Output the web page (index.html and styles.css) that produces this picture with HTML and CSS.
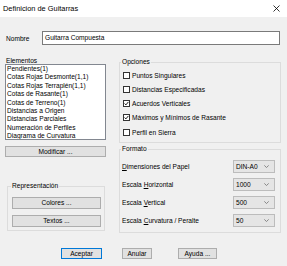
FILE: index.html
```html
<!DOCTYPE html>
<html lang="es">
<head>
    <meta charset="UTF-8">
    <title>Definicion de Guitarras</title>
    <link rel="stylesheet" href="styles.css">
</head>
<body>
<div class="dialog">
    <div class="titlebar">
        <span class="title">Definicion de Guitarras</span>
        <svg class="close" width="7" height="7" viewBox="0 0 7 7"><path d="M0.5 0.5L6.5 6.5M6.5 0.5L0.5 6.5" stroke="#000" stroke-width="0.8"/></svg>
    </div>
    <div class="content">
        <div class="name-row">
            <span class="name-label">Nombre</span>
            <div class="textbox">Guitarra Compuesta</div>
        </div>
        <div class="main">
            <div class="left">
                <div class="caption">Elementos</div>
                <ul class="listbox">
                    <li>Pendientes(1)</li>
                    <li>Cotas Rojas Desmonte(1,1)</li>
                    <li>Cotas Rojas Terraplén(1,1)</li>
                    <li>Cotas de Rasante(1)</li>
                    <li>Cotas de Terreno(1)</li>
                    <li>Distancias a Origen</li>
                    <li>Distancias Parciales</li>
                    <li>Numeración de Perfiles</li>
                    <li>Diagrama de Curvatura</li>
                </ul>
                <div class="btn btn-modificar">Modificar ...</div>
                <fieldset class="group group-rep">
                    <legend>Representación</legend>
                    <div class="btn btn-wide">Colores ...</div>
                    <div class="btn btn-wide btn-textos">Textos ...</div>
                </fieldset>
            </div>
            <div class="right">
                <fieldset class="group group-opc">
                    <legend>Opciones</legend>
                    <div class="check"><span class="box"></span>Puntos Singulares</div>
                    <div class="check"><span class="box"></span>Distancias Especificadas</div>
                    <div class="check"><span class="box"><svg width="5" height="5" viewBox="0 0 5 5"><polyline points="0.6,2.5 1.9,3.9 4.4,0.9" fill="none" stroke="#000" stroke-width="0.9"/></svg></span>Acuerdos Verticales</div>
                    <div class="check"><span class="box"><svg width="5" height="5" viewBox="0 0 5 5"><polyline points="0.6,2.5 1.9,3.9 4.4,0.9" fill="none" stroke="#000" stroke-width="0.9"/></svg></span>Máximos y Mínimos de Rasante</div>
                    <div class="check"><span class="box"></span>Perfil en Sierra</div>
                </fieldset>
                <fieldset class="group group-fmt">
                    <legend>Formato</legend>
                    <div class="row">
                        <span><u>D</u>imensiones del Papel</span>
                        <div class="combo"><span>DIN-A0</span><svg width="5" height="3" viewBox="0 0 5 3"><polyline points="0.3,0.4 2.5,2.5 4.7,0.4" fill="none" stroke="#707070" stroke-width="0.8"/></svg></div>
                    </div>
                    <div class="row">
                        <span>Escala <u>H</u>orizontal</span>
                        <div class="combo"><span>1000</span><svg width="5" height="3" viewBox="0 0 5 3"><polyline points="0.3,0.4 2.5,2.5 4.7,0.4" fill="none" stroke="#707070" stroke-width="0.8"/></svg></div>
                    </div>
                    <div class="row">
                        <span>Escala <u>V</u>ertical</span>
                        <div class="combo"><span>500</span><svg width="5" height="3" viewBox="0 0 5 3"><polyline points="0.3,0.4 2.5,2.5 4.7,0.4" fill="none" stroke="#707070" stroke-width="0.8"/></svg></div>
                    </div>
                    <div class="row">
                        <span>Escala <u>C</u>urvatura / Peralte</span>
                        <div class="combo"><span>50</span><svg width="5" height="3" viewBox="0 0 5 3"><polyline points="0.3,0.4 2.5,2.5 4.7,0.4" fill="none" stroke="#707070" stroke-width="0.8"/></svg></div>
                    </div>
                </fieldset>
            </div>
        </div>
        <div class="footer">
            <div class="btn btn-default">Aceptar</div>
            <div class="btn btn-anular">Anular</div>
            <div class="btn btn-ayuda">Ayuda ...</div>
        </div>
    </div>
</div>
</body>
</html>
```

FILE: styles.css
```css
* {
    margin: 0;
    padding: 0;
    box-sizing: border-box;
    list-style: none;
}

body {
    width: 287px;
    height: 266px;
    overflow: hidden;
    background: #f0f0f0;
    font-family: "Liberation Sans", Arial, sans-serif;
    font-size: 6.6px;
    color: #000;
}

.titlebar {
    height: 17px;
    background: #fff;
    display: flex;
    align-items: center;
    justify-content: space-between;
    padding: 0 7px 0 3px;
}

.title {
    font-size: 7.4px;
}

.content {
    padding: 14px 6px 0 5px;
}

.name-row {
    display: flex;
    align-items: center;
    height: 14px;
}

.name-label {
    width: 37px;
    padding-left: 1px;
}

.textbox {
    width: 238px;
    height: 14px;
    line-height: 12px;
    padding-left: 2px;
    background: #fff;
    border: 1px solid #7a7a7a;
}

.main {
    display: flex;
    gap: 13px;
    margin-top: 12px;
}

.left {
    width: 101px;
}

.right {
    width: 162px;
    margin-top: 1px;
}

.caption {
    height: 7px;
    line-height: 7px;
    padding-left: 1px;
}

.listbox {
    height: 76px;
    overflow: hidden;
    padding-left: 1px;
    background: #fff;
    border: 1px solid #828790;
}

.listbox li {
    line-height: 8.4px;
    white-space: nowrap;
}

.btn {
    height: 11px;
    line-height: 9px;
    text-align: center;
    background: #e1e1e1;
    border: 1px solid #adadad;
}

.btn-modificar {
    margin-top: 6px;
}

.btn-wide {
    height: 12px;
    line-height: 10px;
}

.btn-textos {
    margin-top: 6px;
}

.group {
    border: 1px solid #dcdcdc;
}

.group legend {
    line-height: 8px;
    padding: 0 1px;
    margin-left: -1px;
}

.group-rep {
    margin: 25px 1px 0 2px;
    padding: 7px 3px 3px 4px;
}

.group-opc {
    padding: 2px 3px 3px 3px;
}

.group-opc legend {
    margin-left: -2px;
}

.check {
    display: flex;
    align-items: center;
    height: 14.25px;
}

.box {
    width: 7px;
    height: 7px;
    margin-right: 2px;
    background: #fff;
    border: 1px solid #333;
    display: flex;
    align-items: center;
    justify-content: center;
}

.group-fmt {
    margin-top: 2px;
    padding: 4px 5px 3px 2px;
}

.row {
    display: flex;
    align-items: center;
    justify-content: space-between;
    height: 18px;
}

.combo {
    width: 42px;
    height: 13px;
    display: flex;
    align-items: center;
    justify-content: space-between;
    padding: 0 5px 0 2px;
    background: #e5e5e5;
    border: 1px solid #bcbcbc;
}

.footer {
    display: flex;
    margin-top: 15px;
    padding-left: 56px;
}

.btn-default {
    width: 41px;
    border-color: #0078d7;
}

.btn-anular {
    width: 30px;
    margin-left: 20px;
}

.btn-ayuda {
    width: 39px;
    margin-left: 26px;
}
```
